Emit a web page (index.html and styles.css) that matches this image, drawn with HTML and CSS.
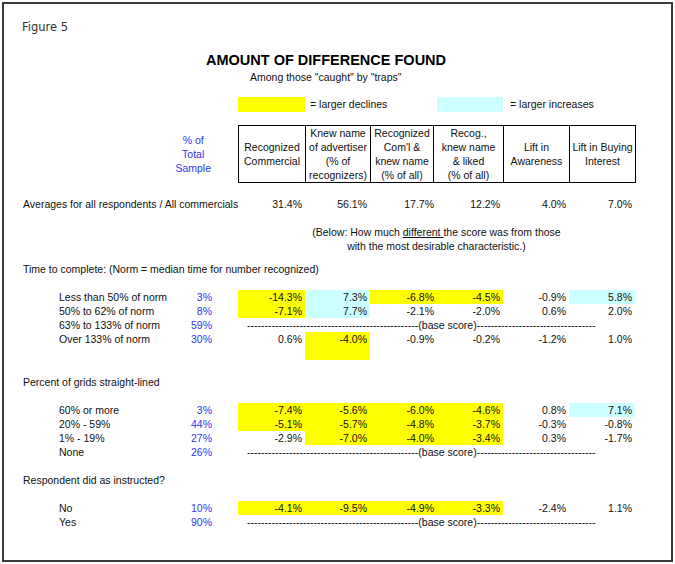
FILE: index.html
```html
<!DOCTYPE html>
<html>
<head>
<meta charset="utf-8">
<link rel="stylesheet" href="styles.css">
</head>
<body>
<div class="frame">
  <div class="fig">Figure 5</div>
  <h1 class="title">AMOUNT OF DIFFERENCE FOUND</h1>
  <div class="sub">Among those "caught" by "traps"</div>

  <div class="grid legend">
    <div class="swatch y sw1"></div>
    <div class="legend-text lt1">= larger declines</div>
    <div class="swatch cy sw2"></div>
    <div class="legend-text lt2">= larger increases</div>
  </div>

  <div class="grid head">
    <div class="pct-head"><div class="pct-head-in">% of<br>Total<br>Sample</div></div>
    <div class="htable">
      <div class="hc">Recognized<br>Commercial</div>
      <div class="hc">Knew name<br>of advertiser<br>(% of<br>recognizers)</div>
      <div class="hc">Recognized<br>Com'l &amp;<br>knew name<br>(% of all)</div>
      <div class="hc">Recog.,<br>knew name<br>&amp; liked<br>(% of all)</div>
      <div class="hc">Lift in<br>Awareness</div>
      <div class="hc">Lift in Buying<br>Interest</div>
    </div>
  </div>

  <div class="grid avg">
    <div class="avg-label">Averages for all respondents / All commercials</div>
    <div class="c d1">31.4%</div>
    <div class="c">56.1%</div>
    <div class="c">17.7%</div>
    <div class="c">12.2%</div>
    <div class="c">4.0%</div>
    <div class="c">7.0%</div>
  </div>

  <div class="grid note-grid">
    <div class="note">(Below: How much <u>different </u>the score was from those<br>with the most desirable characteristic.)</div>
  </div>

  <div class="heading h-time">Time to complete: (Norm = median time for number recognized)</div>
  <div class="grid data">
    <div class="lbl">Less than 50% of norm</div><div class="pct">3%</div>
    <div class="c d1 y">-14.3%</div><div class="c cy">7.3%</div><div class="c y">-6.8%</div><div class="c y">-4.5%</div><div class="c">-0.9%</div><div class="c cy">5.8%</div>

    <div class="lbl">50% to 62% of norm</div><div class="pct">8%</div>
    <div class="c d1 y">-7.1%</div><div class="c cy">7.7%</div><div class="c">-2.1%</div><div class="c">-2.0%</div><div class="c">0.6%</div><div class="c">2.0%</div>

    <div class="lbl">63% to 133% of norm</div><div class="pct">59%</div>
    <div class="base">-------------------------------------------------(base score)----------------------------------</div>

    <div class="lbl">Over 133% of norm</div><div class="pct">30%</div>
    <div class="c d1">0.6%</div><div class="c y span2">-4.0%</div><div class="c">-0.9%</div><div class="c">-0.2%</div><div class="c">-1.2%</div><div class="c">1.0%</div>
  </div>

  <div class="heading h-pct">Percent of grids straight-lined</div>
  <div class="grid data">
    <div class="lbl">60% or more</div><div class="pct">3%</div>
    <div class="c d1 y">-7.4%</div><div class="c y">-5.6%</div><div class="c y">-6.0%</div><div class="c y">-4.6%</div><div class="c">0.8%</div><div class="c cy">7.1%</div>

    <div class="lbl">20% - 59%</div><div class="pct">44%</div>
    <div class="c d1 y">-5.1%</div><div class="c y">-5.7%</div><div class="c y">-4.8%</div><div class="c y">-3.7%</div><div class="c">-0.3%</div><div class="c">-0.8%</div>

    <div class="lbl">1% - 19%</div><div class="pct">27%</div>
    <div class="c d1">-2.9%</div><div class="c y">-7.0%</div><div class="c y">-4.0%</div><div class="c y">-3.4%</div><div class="c">0.3%</div><div class="c">-1.7%</div>

    <div class="lbl">None</div><div class="pct">26%</div>
    <div class="base">-------------------------------------------------(base score)----------------------------------</div>
  </div>

  <div class="heading h-resp">Respondent did as instructed?</div>
  <div class="grid data">
    <div class="lbl">No</div><div class="pct">10%</div>
    <div class="c d1 y">-4.1%</div><div class="c y">-9.5%</div><div class="c y">-4.9%</div><div class="c y">-3.3%</div><div class="c">-2.4%</div><div class="c">1.1%</div>

    <div class="lbl">Yes</div><div class="pct">90%</div>
    <div class="base">-------------------------------------------------(base score)----------------------------------</div>
  </div>
</div>
</body>
</html>
```

FILE: styles.css
```css
html, body {
  margin: 0;
  padding: 0;
  background: #ffffff;
}

body {
  font-family: "Liberation Sans", Arial, sans-serif;
  font-size: 10.5px;
  color: #111;
}

.frame {
  box-sizing: border-box;
  width: 671px;
  height: 560px;
  margin: 2px;
  border: 2px solid #3a3a3a;
  padding: 14px 0 0 19px;
  overflow: hidden;
}

.fig {
  font-family: "DejaVu Sans", Verdana, sans-serif;
  font-size: 11.5px;
  line-height: 14px;
  padding-top: 2px;
  color: #333;
  margin-left: -1px;
}

.title {
  margin: 16px 0 0 0;
  padding-left: 183px;
  font-size: 14.5px;
  line-height: 20px;
  font-weight: bold;
  color: #000;
}

.sub {
  padding-left: 227px;
  line-height: 14px;
}

.grid {
  display: grid;
  grid-template-columns: 36px 121px 32px 26px 67px 65px 67px 66px 66px 66px;
  grid-auto-rows: 14px;
  line-height: 14px;
}

.legend {
  margin-top: 13px;
  grid-auto-rows: 15px;
  line-height: 15px;
}

.swatch { height: 15px; }
.sw1 { grid-column: 5; }
.sw2 { grid-column: 8; }
.legend-text { white-space: nowrap; }
.lt1 { grid-column: 6 / 8; padding-left: 5px; }
.lt2 { grid-column: 9 / 11; padding-left: 7px; }

.head {
  margin-top: 13px;
  grid-auto-rows: auto;
}

.pct-head {
  grid-column: 2 / 4;
  display: flex;
  justify-content: flex-end;
  align-items: center;
}

.pct-head-in {
  text-align: center;
  color: #3333f0;
  line-height: 14px;
  padding-right: 1px;
}

.htable {
  grid-column: 5 / 11;
  display: grid;
  grid-template-columns: 66px 64px 62px 69px 65px 65px;
  gap: 1px;
  background: #000;
  border: 1px solid #000;
  width: 396px;
}

.hc {
  background: #fff;
  height: 56px;
  display: flex;
  align-items: center;
  justify-content: center;
  text-align: center;
  line-height: 14px;
  white-space: nowrap;
}

.avg { margin-top: 14px; }

.avg-label {
  grid-column: 1 / 5;
  white-space: nowrap;
  overflow: hidden;
}

.note-grid { margin-top: 14px; }

.note {
  grid-column: 5 / 11;
  grid-row: 1 / 3;
  text-align: center;
  white-space: nowrap;
}

.heading { line-height: 14px; }
.h-time { margin-top: 9px; }
.h-pct { margin-top: 15px; }
.h-resp { margin-top: 14px; }

.data { margin-top: 14px; }

.lbl {
  grid-column: 2;
  white-space: nowrap;
}

.pct {
  text-align: right;
  color: #3333f0;
}

.c {
  text-align: right;
  padding-right: 3px;
  white-space: nowrap;
}

.d1 { grid-column: 5; }

.span2 { grid-row: span 2; }

.base {
  grid-column: 5 / 11;
  padding-left: 9px;
  white-space: nowrap;
  overflow: hidden;
}

.y { background: #ffff00; }
.cy { background: #ccffff; }
```
